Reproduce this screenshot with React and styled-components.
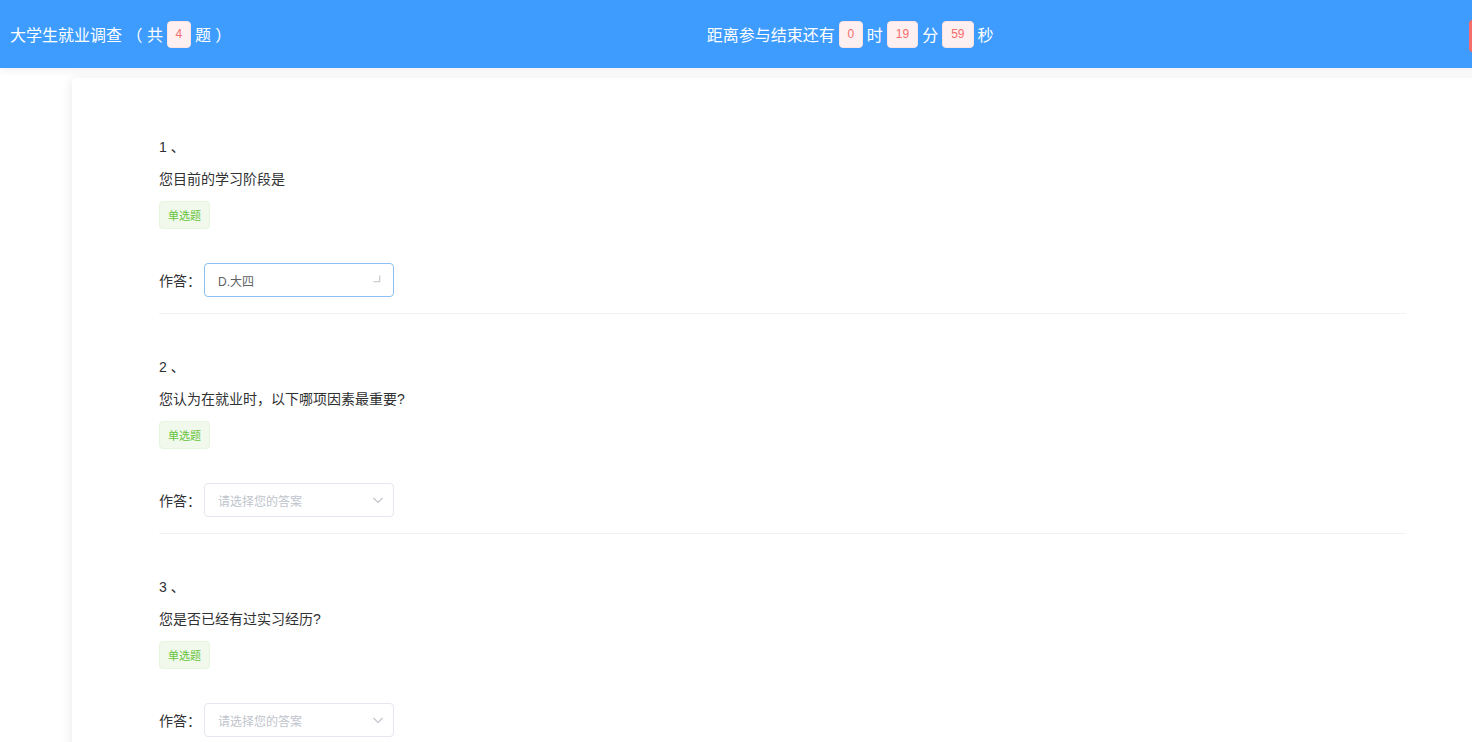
import React from 'react'
import styled, { createGlobalStyle } from 'styled-components'

const GlobalStyle = createGlobalStyle`
  html, body {
    margin: 0;
    padding: 0;
    background: #ffffff;
    overflow: hidden;
  }
  body {
    font-family: "Liberation Sans", "Noto Sans CJK SC", sans-serif;
    color: #303133;
  }
`

const Page = styled.div`
  width: 1565px;
  min-height: 742px;
`

const Header = styled.header`
  position: relative;
  z-index: 2;
  height: 68px;
  padding: 0 10px;
  background: #3e9cff;
  box-shadow: 0 3px 8px rgba(0, 0, 0, 0.06);
  display: flex;
  align-items: center;
  justify-content: space-between;
  color: #ffffff;
  font-size: 16px;
`

const Title = styled.div`
  display: flex;
  align-items: center;
  white-space: pre;
`

const Timer = styled.div`
  display: flex;
  align-items: center;
  white-space: pre;
`

const Count = styled.span`
  display: inline-flex;
  align-items: center;
  justify-content: center;
  height: 27px;
  min-width: 24px;
  box-sizing: border-box;
  padding: 0 ${p => (p.$wide ? '8px' : '0')};
  margin: 0 4px;
  background: #fef0f0;
  border: 1px solid #fde2e2;
  border-radius: 4px;
  color: #f56c6c;
  font-size: 12px;
`

const SubmitButton = styled.button`
  width: 86px;
  height: 32px;
  border: 1px solid #f56c6c;
  border-radius: 3px;
  background: #f56c6c;
  color: #ffffff;
  font-family: inherit;
  font-size: 12px;
  margin-top: 4px;
`

const Card = styled.main`
  margin: 10px 72px 0;
  padding: 59px 87px 40px;
  background: #ffffff;
  border-radius: 4px;
  box-shadow: 0 2px 12px 0 rgba(0, 0, 0, 0.1);
`

const Question = styled.section`
  & + & {
    margin-top: 43px;
  }
`

const Num = styled.div`
  font-size: 14px;
  line-height: 20px;
  color: #303133;
  white-space: pre;
`

const Text = styled.div`
  margin-top: 12px;
  font-size: 14px;
  line-height: 20px;
  color: #303133;
`

const Tag = styled.span`
  display: inline-flex;
  align-items: center;
  height: 28px;
  margin-top: 12px;
  padding: 0 8px;
  box-sizing: border-box;
  background: #f0f9eb;
  border: 1px solid #e7f5df;
  border-radius: 4px;
  color: #67c23a;
  font-size: 11px;
`

const AnswerRow = styled.div`
  display: flex;
  align-items: center;
  margin-top: 34px;
`

const Label = styled.span`
  font-size: 14px;
  color: #303133;
  width: 45px;
`

const Select = styled.div`
  width: 190px;
  height: 34px;
  box-sizing: border-box;
  padding: 0 9px 0 13px;
  display: flex;
  align-items: center;
  justify-content: space-between;
  border: 1px solid ${p => (p.$focus ? '#8cc0f5' : '#e4e7ed')};
  border-radius: 4px;
  background: #ffffff;
  font-size: 12px;
  color: ${p => (p.$empty ? '#c0c4cc' : '#606266')};
`

const Arrow = styled.svg`
  width: 12px;
  height: 12px;
  transform: rotate(${p => (p.$turning ? '-45deg' : '0deg')});
`

const Divider = styled.div`
  margin-top: 16px;
  height: 1px;
  background: #f0f2f5;
`

const questions = [
  { text: '您目前的学习阶段是', answer: 'D.大四' },
  { text: '您认为在就业时，以下哪项因素最重要?' },
  { text: '您是否已经有过实习经历?' },
]

function App() {
  return (
    <Page>
      <GlobalStyle />
      <Header>
        <Title>
          {'大学生就业调查 （ 共'}
          <Count>4</Count>
          {'题 ）'}
        </Title>
        <Timer>
          距离参与结束还有
          <Count>0</Count>
          时
          <Count $wide>19</Count>
          分
          <Count $wide>59</Count>
          秒
        </Timer>
        <SubmitButton>交卷</SubmitButton>
      </Header>
      <Card>
        {questions.map((q, i) => (
          <Question key={i}>
            <Num>{`${i + 1} 、`}</Num>
            <Text>{q.text}</Text>
            <Tag>单选题</Tag>
            <AnswerRow>
              <Label>作答：</Label>
              <Select $focus={!!q.answer} $empty={!q.answer}>
                <span>{q.answer || '请选择您的答案'}</span>
                <Arrow viewBox="0 0 12 12" $turning={!!q.answer}>
                  <polyline
                    points="1.5,4 6,8.5 10.5,4"
                    fill="none"
                    stroke="#c0c4cc"
                    strokeWidth="1.1"
                  />
                </Arrow>
              </Select>
            </AnswerRow>
            <Divider />
          </Question>
        ))}
      </Card>
    </Page>
  )
}

export default App
